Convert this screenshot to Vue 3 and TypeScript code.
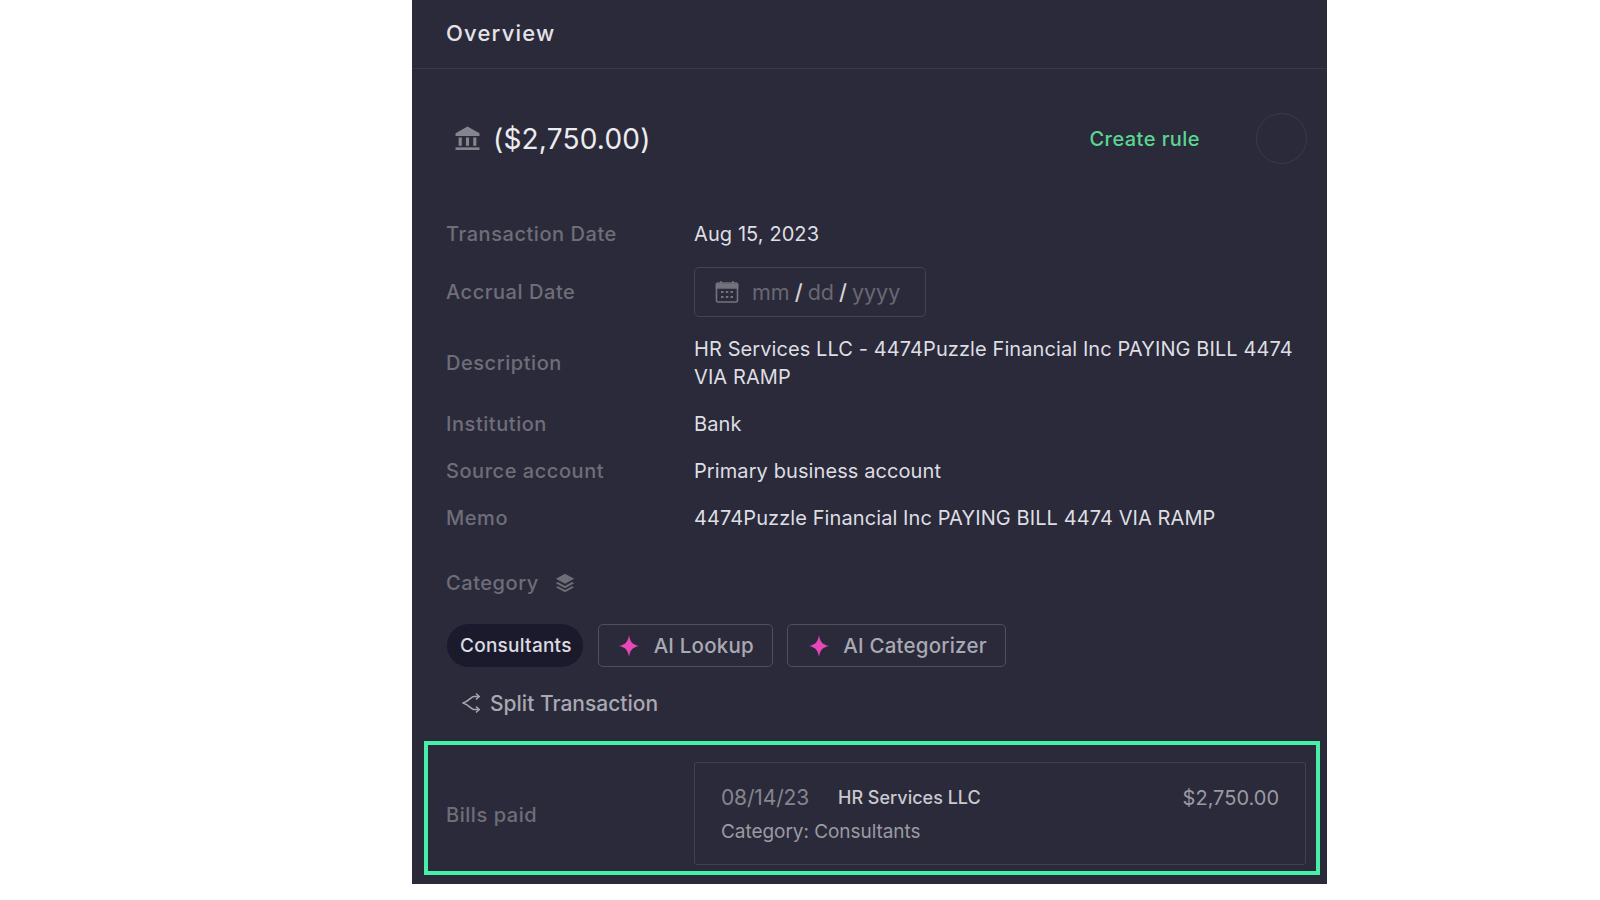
<script setup lang="ts">
interface Row { label: string; value: string }
const topRows: Row[] = [
  { label: 'Description', value: 'HR Services LLC - 4474Puzzle Financial Inc PAYING BILL 4474 VIA RAMP' },
  { label: 'Institution', value: 'Bank' },
  { label: 'Source account', value: 'Primary business account' },
  { label: 'Memo', value: '4474Puzzle Financial Inc PAYING BILL 4474 VIA RAMP' },
]
const star = 'M12 1c.9 6.600 3.400 9.600 10 11-6.600 1.400-9.100 4.400-10 11-.9-6.600-3.400-9.600-10-11 6.600-1.400 9.100-4.400 10-11z'
</script>

<template>
  <div class="page">
    <main class="panel">
      <header class="head">Overview</header>
      <section class="amount-row">
        <div class="amount">
          <svg class="bank" viewBox="0 0 24 24" width="25" height="25" fill="#85858f">
            <path d="M12 .5 23.500 7v2.500H.5V7z" />
            <rect x="3.500" y="11" width="3" height="8" />
            <rect x="10.500" y="11" width="3" height="8" />
            <rect x="17.500" y="11" width="3" height="8" />
            <rect x=".5" y="20.500" width="23" height="2.500" />
          </svg>
          <span>($2,750.00)</span>
        </div>
        <a class="rule">Create rule</a>
        <span class="circle"></span>
      </section>

      <section class="details">
        <div class="row first">
          <span class="label">Transaction Date</span>
          <span class="value">Aug 15, 2023</span>
        </div>
        <div class="row accrual">
          <span class="label">Accrual Date</span>
          <div class="date">
            <svg viewBox="0 0 24 24" width="24" height="24" fill="none" stroke="#73737d" stroke-width="1.600">
              <rect x="1.500" y="3" width="21" height="19" rx="1.500" />
              <path d="M1.500 4.500h21v3.500h-21z" fill="#73737d" />
              <path d="M6 1v3M18 1v3" />
              <path d="M6 12h2.500M10.800 12h2.500M15.500 12h2.500M6 17h2.500M10.800 17h2.500M15.500 17h2.500" stroke-width="2" />
            </svg>
            <span class="ph">mm</span><b>/</b><span class="ph">dd</span><b>/</b><span class="ph">yyyy</span>
          </div>
        </div>
        <div v-for="row in topRows" :key="row.label" class="row text-row">
          <span class="label">{{ row.label }}</span>
          <span class="value">{{ row.value }}</span>
        </div>
      </section>

      <div class="category-title">
        <span class="label">Category</span>
        <svg viewBox="0 0 24 24" width="20" height="22" fill="#6d6d77">
          <path d="M12 1 23 7l-11 6L1 7z" />
          <path d="M3.500 10.800 12 15.500l8.500-4.700L23 12.200l-11 6-11-6z" />
          <path d="M3.500 15.800 12 20.500l8.500-4.700L23 17.200 12 23 1 17.200z" />
        </svg>
      </div>

      <div class="chips">
        <span class="pill">Consultants</span>
        <button class="ai">
          <svg viewBox="0 0 24 24" width="24" height="24"><path fill="#e648b8" :d="star" /></svg>
          AI Lookup
        </button>
        <button class="ai">
          <svg viewBox="0 0 24 24" width="24" height="24"><path fill="#e648b8" :d="star" /></svg>
          AI Categorizer
        </button>
      </div>

      <div class="split">
        <svg viewBox="0 0 20 20" width="20" height="20" fill="none" stroke="#a6a6ae" stroke-width="1.600" stroke-linecap="round" stroke-linejoin="round">
          <path d="M18 3.500h-5C10 3.500 8.500 8 2 10c6.500 2 8 6.500 11 6.500h5" />
          <path d="M15.500 1l2.700 2.500L15.500 6M15.500 14l2.700 2.500-2.700 2.500" />
        </svg>
        <span>Split Transaction</span>
      </div>

      <section class="bills">
        <span class="label bills-label">Bills paid</span>
        <div class="bill">
          <div class="bill-top">
            <span class="bill-date">08/14/23</span>
            <span class="bill-name">HR Services LLC</span>
            <span class="bill-amt">$2,750.00</span>
          </div>
          <div class="bill-cat">Category: Consultants</div>
        </div>
      </section>

      <div class="highlight"></div>
    </main>
  </div>
</template>

<style>
html, body { background: #fff; margin: 0; }
</style>

<style scoped>
.page {
  width: 1600px;
  height: 900px;
  overflow: hidden;
  padding-left: 412px;
  box-sizing: border-box;
  font-family: Inter, "Liberation Sans", sans-serif;
}
.panel {
  position: relative;
  width: 915px;
  height: 884px;
  background: #2b2a3b;
  color: #dedee2;
}
.head {
  padding: 0 34px 2px;
  height: 66px;
  display: flex;
  align-items: center;
  border-bottom: 1px solid #383848;
  font-size: 22px;
  font-weight: 500;
  letter-spacing: 1.200px;
  color: #e4e4e8;
}
.amount-row {
  height: 136px;
  display: flex;
  align-items: center;
  padding: 3px 20px 0 43px;
  box-sizing: border-box;
}
.amount {
  display: flex;
  align-items: center;
  gap: 13px;
  font-size: 28px;
  letter-spacing: .2px;
  color: #ececef;
  flex: 1;
}
.rule {
  color: #59d68f;
  font-size: 20px;
  font-weight: 500;
  letter-spacing: .45px;
  margin-right: 56px;
}
.circle {
  width: 51px;
  height: 51px;
  border: 1px solid #3a3a4a;
  border-radius: 50%;
  box-sizing: border-box;
}
.details {
  padding: 0 34px;
}
.row {
  display: grid;
  grid-template-columns: 248px 1fr;
  align-items: center;
}
.first { height: 48px; margin-top: 5px; }
.accrual { height: 58px; margin-top: 5px; }
.label {
  font-size: 20px;
  font-weight: 500;
  letter-spacing: .55px;
  color: #6e6e78;
}
.value {
  font-size: 20px;
  line-height: 28px;
  letter-spacing: .09px;
  color: #dedee2;
}
.text-row { min-height: 47px; }
.text-row:nth-child(3) { margin-top: 14px; min-height: 56px; margin-bottom: 9.500px; }
.date {
  width: 232px;
  height: 50px;
  box-sizing: border-box;
  border: 1px solid #434352;
  border-radius: 5px;
  display: flex;
  align-items: center;
  padding-left: 20px;
  gap: 5px;
  font-size: 21.500px;
  color: #686872;
}
.date svg { margin-right: 8px; }
.date b { font-weight: 500; color: #d2d2d8; }
.category-title {
  display: flex;
  align-items: center;
  gap: 16px;
  padding: 0 34px;
  margin-top: 17.500px;
  height: 48px;
}
.chips {
  display: flex;
  align-items: center;
  gap: 15px;
  padding: 0 35px;
  margin-top: 17px;
}
.pill {
  height: 43px;
  padding: 0 11px 0 13px;
  border-radius: 22px;
  background: #1b1a2c;
  display: flex;
  align-items: center;
  font-size: 19px;
  font-weight: 500;
  letter-spacing: .25px;
  color: #dcdce0;
}
.ai {
  height: 43px;
  box-sizing: border-box;
  padding: 0 18.500px 0 18.500px;
  background: transparent;
  border: 1.500px solid #4f4f5d;
  border-radius: 5px;
  display: flex;
  align-items: center;
  gap: 12.500px;
  font: 500 20.500px Inter, "Liberation Sans", sans-serif;
  letter-spacing: .2px;
  color: #a9a9b1;
}
.ai + .ai { margin-left: -1px; }
.split {
  display: flex;
  align-items: center;
  gap: 9px;
  padding-left: 49px;
  margin-top: 22px;
  height: 28px;
  font-size: 21px;
  font-weight: 500;
  color: #a9a9b1;
}
.bills {
  display: grid;
  grid-template-columns: 248px 1fr;
  align-items: center;
  padding: 0 21px 0 34px;
  margin-top: 45px;
}
.bills-label { padding-top: 2px; }
.bill {
  height: 103px;
  box-sizing: border-box;
  border: 1px solid #404050;
  border-radius: 3px;
  padding: 22px 26px 0;
}
.bill-top {
  display: flex;
  align-items: center;
}
.bill-date {
  font-size: 21px;
  letter-spacing: -.15px;
  color: #85858e;
  width: 117px;
}
.bill-name {
  font-size: 18px;
  font-weight: 500;
  flex: 1;
  color: #c9c9cf;
}
.bill-amt {
  font-size: 20px;
  color: #9a9aa2;
}
.bill-cat {
  margin-top: 10px;
  font-size: 19px;
  letter-spacing: -.05px;
  color: #9a9aa2;
}
.highlight {
  position: absolute;
  left: 12px;
  top: 741px;
  width: 896px;
  height: 134px;
  box-sizing: border-box;
  border: 4px solid #46f0a8;
  pointer-events: none;
}
</style>
